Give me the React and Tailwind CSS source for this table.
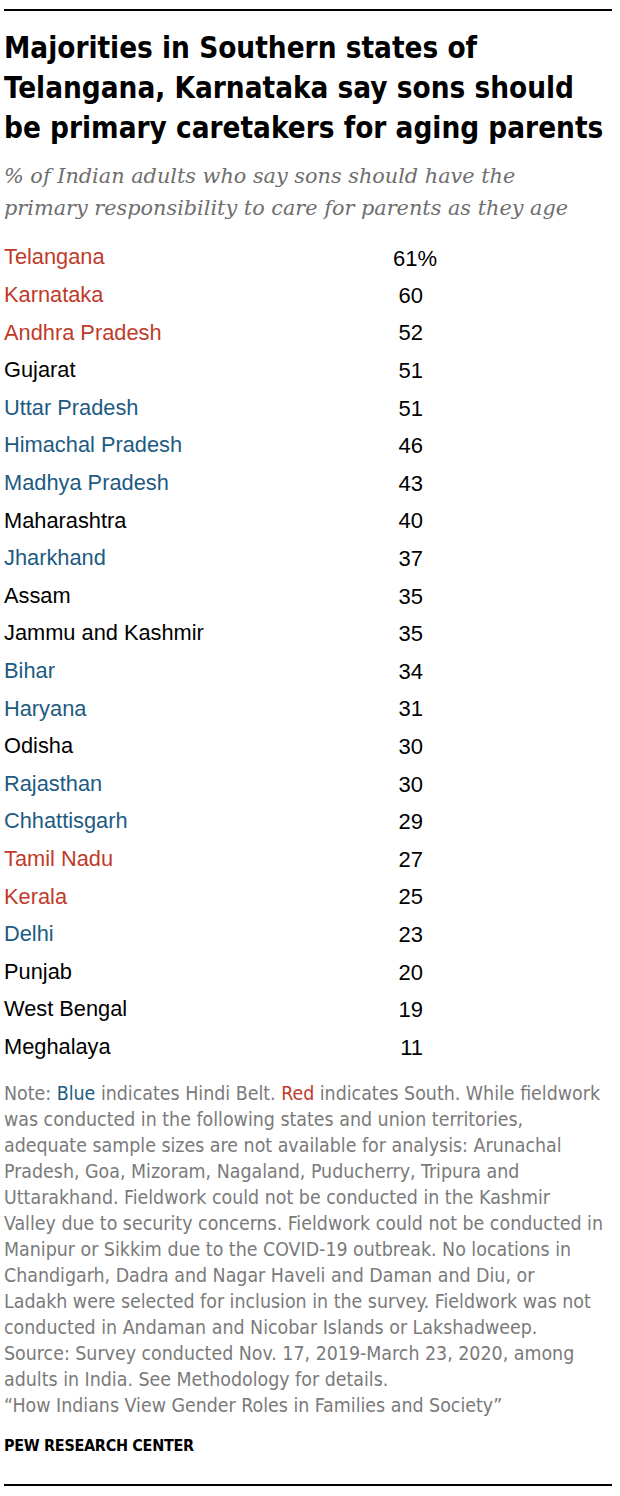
import React from 'react';

const RED = 'text-[#bf3b2b]';
const BLUE = 'text-[#1d5b82]';
const BLACK = 'text-black';

const rows = [
  ['Telangana', '61', RED, true],
  ['Karnataka', '60', RED],
  ['Andhra Pradesh', '52', RED],
  ['Gujarat', '51', BLACK],
  ['Uttar Pradesh', '51', BLUE],
  ['Himachal Pradesh', '46', BLUE],
  ['Madhya Pradesh', '43', BLUE],
  ['Maharashtra', '40', BLACK],
  ['Jharkhand', '37', BLUE],
  ['Assam', '35', BLACK],
  ['Jammu and Kashmir', '35', BLACK],
  ['Bihar', '34', BLUE],
  ['Haryana', '31', BLUE],
  ['Odisha', '30', BLACK],
  ['Rajasthan', '30', BLUE],
  ['Chhattisgarh', '29', BLUE],
  ['Tamil Nadu', '27', RED],
  ['Kerala', '25', RED],
  ['Delhi', '23', BLUE],
  ['Punjab', '20', BLACK],
  ['West Bengal', '19', BLACK],
  ['Meghalaya', '11', BLACK],
];

export default function App() {
  return (
    <div className="w-[620px] h-[1496px] bg-white px-[4px] pt-[9px] font-['Liberation_Sans',Arial,sans-serif]">
      <div className="border-t-[2px] border-black w-[608px]" />

      {/* Title */}
      <h1 className="mt-[17px] text-[29.4px] leading-[40px] font-bold text-black font-['DejaVu_Sans_Condensed',sans-serif]">
        Majorities in Southern states of<br />
        Telangana, Karnataka say sons should<br />
        be primary caretakers for aging parents
      </h1>
      <p className="mt-[12px] text-[20.8px] leading-[32px] italic text-[#6e6e6e] font-['DejaVu_Serif','Liberation_Serif',serif]">
        % of Indian adults who say sons should have the<br />
        primary responsibility to care for parents as they age
      </p>

      {/* Rows */}
      <div className="mt-[15px]">
        {rows.map(([name, val, color, pct]) => (
          <div key={name} className="flex items-center h-[37.6px] text-[21.8px]">
            <span className={`w-[359px] ${color}`}>{name}</span>
            <span className="w-[60px] text-right text-[22px] text-black relative">
              {pct ? (
                <span className="absolute left-[30px] top-1/2 -translate-y-1/2">{val}%</span>
              ) : (
                val
              )}
            </span>
          </div>
        ))}
      </div>

      {/* Note */}
      <div className="mt-[15px] text-[19.4px] leading-[26px] text-[#7a7a7a] whitespace-nowrap font-['DejaVu_Sans_Condensed',sans-serif]">
        <p>
          Note: <span className={BLUE}>Blue</span> indicates Hindi Belt. <span className={RED}>Red</span> indicates South. While fieldwork<br />
          was conducted in the following states and union territories,<br />
          adequate sample sizes are not available for analysis: Arunachal<br />
          Pradesh, Goa, Mizoram, Nagaland, Puducherry, Tripura and<br />
          Uttarakhand. Fieldwork could not be conducted in the Kashmir<br />
          Valley due to security concerns. Fieldwork could not be conducted in<br />
          Manipur or Sikkim due to the COVID-19 outbreak. No locations in<br />
          Chandigarh, Dadra and Nagar Haveli and Daman and Diu, or<br />
          Ladakh were selected for inclusion in the survey. Fieldwork was not<br />
          conducted in Andaman and Nicobar Islands or Lakshadweep.
        </p>
        <p>
          Source: Survey conducted Nov. 17, 2019-March 23, 2020, among<br />
          adults in India. See Methodology for details.
        </p>
        <p>“How Indians View Gender Roles in Families and Society”</p>
      </div>
      <div className="mt-[17px] text-[16px] leading-[20px] font-bold text-black tracking-[-0.3px] font-['DejaVu_Sans_Condensed',sans-serif]">
        PEW RESEARCH CENTER
      </div>
      <div className="mt-[28px] border-t-[2px] border-black w-[608px]" />
    </div>
  );
}
